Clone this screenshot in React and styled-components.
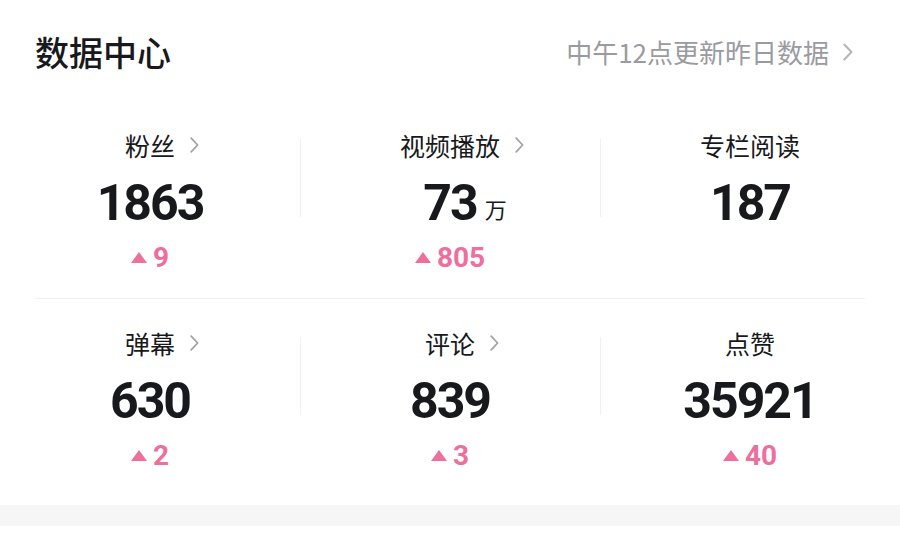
import React from "react";
import styled, { createGlobalStyle } from "styled-components";

const Global = createGlobalStyle`
  html, body { margin: 0; padding: 0; background: #ffffff; }
  body { font-family: "Noto Sans CJK SC", "Noto Sans", sans-serif; -webkit-font-smoothing: antialiased; }
`;

const Card = styled.section`
  background: #ffffff;
  padding-bottom: 9px;
`;

const Header = styled.header`
  height: 101px;
  display: flex;
  align-items: center;
  justify-content: space-between;
  padding: 2px 47px 0 35px;
  box-sizing: border-box;
`;

const Title = styled.h1`
  margin: 0;
  font-size: 34px;
  font-weight: 500;
  color: #18191c;
  line-height: 46px;
`;

const UpdateLink = styled.a`
  display: flex;
  align-items: center;
  gap: 14px;
  font-size: 26px;
  color: #9a9ba0;
  text-decoration: none;
  line-height: 36px;
`;

const Grid = styled.div`
  display: grid;
  grid-template-columns: repeat(3, 1fr);
`;

const Divider = styled.div`
  height: 1px;
  margin: 0 35px;
  background: #f1f1f2;
`;

const Cell = styled.div`
  position: relative;
  display: flex;
  flex-direction: column;
  align-items: center;
  padding: 27px 0 24px;

  ${(p) =>
    p.$sep &&
    `
    &::before {
      content: "";
      position: absolute;
      left: 0;
      top: 38px;
      width: 1px;
      height: 78px;
      background: #f1f1f2;
    }
  `}
`;

const Label = styled.div`
  position: relative;
  font-size: 25px;
  line-height: 34px;
  height: 34px;
  color: #18191c;
`;

const LabelArrow = styled.span`
  position: absolute;
  left: calc(100% + 15px);
  top: 9px;
  display: flex;
`;

const Value = styled.div`
  position: relative;
  margin-top: 13px;
  height: 56px;
  line-height: 56px;
  font-family: Roboto, "Liberation Sans", sans-serif;
  font-weight: 700;
  font-size: 50px;
  letter-spacing: -2px;
  color: #18191c;
`;

const Unit = styled.span`
  position: absolute;
  left: calc(100% + 8px);
  bottom: 12px;
  font-family: "Noto Sans CJK SC", sans-serif;
  font-weight: 400;
  font-size: 22px;
  line-height: 22px;
  letter-spacing: 0;
`;

const Delta = styled.div`
  margin-top: 11px;
  height: 32px;
  display: flex;
  align-items: center;
  gap: 6px;
  font-family: Roboto, "Liberation Sans", sans-serif;
  font-weight: 700;
  font-size: 28px;
  line-height: 32px;
  color: #ee6e9c;
`;

const Triangle = styled.span`
  width: 0;
  height: 0;
  border-left: 8px solid transparent;
  border-right: 8px solid transparent;
  border-bottom: 11px solid #ee6e9c;
  margin-top: -2px;
`;

const Chevron = ({ w = 9, h = 16, color = "#a3a4a8" }) => (
  <svg width={w} height={h} viewBox="0 0 9 16" fill="none">
    <path d="M1.2 1.2 L7.6 8 L1.2 14.8" stroke={color} strokeWidth="1.8" strokeLinecap="round" strokeLinejoin="round" />
  </svg>
);

const rows = [
  [
    { label: "粉丝", arrow: true, value: "1863", delta: "9" },
    { label: "视频播放", arrow: true, value: "73", unit: "万", delta: "805" },
    { label: "专栏阅读", arrow: false, value: "187" },
  ],
  [
    { label: "弹幕", arrow: true, value: "630", delta: "2" },
    { label: "评论", arrow: true, value: "839", delta: "3" },
    { label: "点赞", arrow: false, value: "35921", delta: "40" },
  ],
];

const Stat = ({ item, sep }) => (
  <Cell $sep={sep}>
    <Label>
      {item.label}
      {item.arrow && (
        <LabelArrow>
          <Chevron />
        </LabelArrow>
      )}
    </Label>
    <Value>
      {item.value}
      {item.unit && <Unit>{item.unit}</Unit>}
    </Value>
    {item.delta && (
      <Delta>
        <Triangle />
        {item.delta}
      </Delta>
    )}
  </Cell>
);

const Band = styled.div`
  height: 21px;
  background: #f6f6f7;
`;

export default function App() {
  return (
    <>
      <Global />
      <Card>
        <Header>
          <Title>数据中心</Title>
          <UpdateLink href="#">
            中午12点更新昨日数据
            <Chevron w={10} h={18} color="#b4b5b9" />
          </UpdateLink>
        </Header>
        <Grid>
          {rows[0].map((it, i) => (
            <Stat key={i} item={it} sep={i > 0} />
          ))}
        </Grid>
        <Divider />
        <Grid>
          {rows[1].map((it, i) => (
            <Stat key={i} item={it} sep={i > 0} />
          ))}
        </Grid>
      </Card>
      <Band />
    </>
  );
}
